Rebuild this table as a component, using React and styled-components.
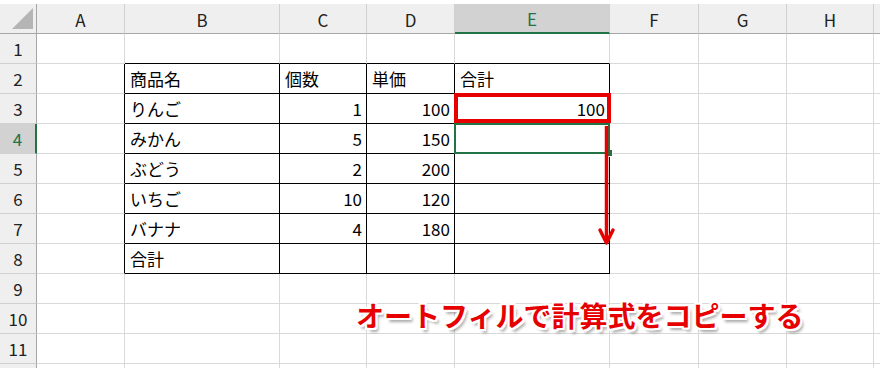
import React from 'react'
import styled, { createGlobalStyle } from 'styled-components'

const GRID = '#d9d9d9'
const HEAD_LINE = '#a6a6a6'
const INK = '#000'
const SELECT = '#217346'
const MARK = '#e60000'

const COLS = ['A', 'B', 'C', 'D', 'E', 'F', 'G', 'H', 'I']
const WIDTHS = [88, 155, 87, 88, 155, 89, 88, 87, 100]
const ROW_COUNT = 12
const LABELED_ROWS = 11

// table body: B2:E8
const DATA = {
  2: ['商品名', '個数', '単価', '合計'],
  3: ['りんご', 1, 100, 100],
  4: ['みかん', 5, 150, ''],
  5: ['ぶどう', 2, 200, ''],
  6: ['いちご', 10, 120, ''],
  7: ['バナナ', 4, 180, ''],
  8: ['合計', '', '', '']
}

const GlobalStyle = createGlobalStyle`
  body {
    margin: 0;
    background: #fff;
    font-family: "Noto Sans CJK JP", "Noto Sans", sans-serif;
    overflow: hidden;
  }
`

const Page = styled.div`
  padding-top: 4px;
  width: 880px;
  height: 364px;
  overflow: hidden;
`

const Sheet = styled.div`
  position: relative;
  display: grid;
  grid-template-columns: 37px ${WIDTHS.map(w => `${w}px`).join(' ')};
  grid-template-rows: 30px repeat(${ROW_COUNT}, 30px);
`

const Corner = styled.div`
  background: #efefef;
  border-right: 1px solid ${HEAD_LINE};
  border-bottom: 1px solid ${HEAD_LINE};
  box-sizing: border-box;

  svg {
    display: block;
  }
`

const ColHead = styled.div`
  box-sizing: border-box;
  display: flex;
  align-items: center;
  justify-content: center;
  background: ${({ $active }) => ($active ? '#d2d2d2' : '#efefef')};
  color: ${({ $active }) => ($active ? SELECT : '#222')};
  border-right: 1px solid #d0d0d0;
  border-bottom: ${({ $active }) => ($active ? `2px solid ${SELECT}` : `1px solid ${HEAD_LINE}`)};
  font-size: 17px;
  padding-top: 1px;
`

const RowHead = styled.div`
  box-sizing: border-box;
  display: flex;
  align-items: center;
  justify-content: center;
  background: ${({ $active }) => ($active ? '#d2d2d2' : '#efefef')};
  color: ${({ $active }) => ($active ? SELECT : '#222')};
  border-right: ${({ $active }) => ($active ? `2px solid ${SELECT}` : `1px solid ${HEAD_LINE}`)};
  border-bottom: 1px solid #d0d0d0;
  font-size: 17px;
`

const Cell = styled.div`
  position: relative;
  box-sizing: border-box;
  display: flex;
  align-items: center;
  justify-content: ${({ $align }) => ($align === 'right' ? 'flex-end' : 'flex-start')};
  padding: 0 4px 0 5px;
  border-right: 1px solid ${({ $right }) => $right};
  border-bottom: 1px solid ${({ $bottom }) => $bottom};
  color: ${INK};
  font-size: 17px;
  white-space: nowrap;

  ${({ $boxed }) =>
    $boxed &&
    `
    &::after {
      content: '';
      position: absolute;
      left: -1px;
      top: -1px;
      right: -2px;
      bottom: 0;
      border: 4px solid ${MARK};
      z-index: 2;
    }
  `}

  ${({ $selected }) =>
    $selected &&
    `
    &::after {
      content: '';
      position: absolute;
      left: -1px;
      top: -1px;
      right: -1px;
      bottom: -1px;
      border: 2px solid ${SELECT};
      z-index: 1;
    }
    &::before {
      content: '';
      position: absolute;
      right: -4px;
      bottom: -4px;
      width: 6px;
      height: 6px;
      background: ${SELECT};
      border: 1px solid #fff;
      z-index: 1;
    }
  `}
`

const Arrow = styled.svg`
  position: absolute;
  left: 596px;
  top: 118px;
  z-index: 3;
  overflow: visible;
`

const Caption = styled.div`
  position: absolute;
  left: 356px;
  top: 295px;
  z-index: 3;
  font-size: 28px;
  line-height: 32px;
  font-weight: 700;
  color: ${MARK};
  white-space: nowrap;
  text-shadow:
    -2px 0 0 #fff, 2px 0 0 #fff, 0 -2px 0 #fff, 0 2px 0 #fff,
    -2px -2px 0 #fff, 2px -2px 0 #fff, -2px 2px 0 #fff, 2px 2px 0 #fff,
    3px 4px 3px rgba(0, 0, 0, 0.35);
`

const inTable = (r, c) => r >= 2 && r <= 8 && c >= 1 && c <= 4

function borderRight(r, c) {
  // column A's right edge is the table's left edge
  if (r >= 2 && r <= 8 && c >= 0 && c <= 4) return INK
  return GRID
}

function borderBottom(r, c) {
  if (r >= 1 && r <= 8 && c >= 1 && c <= 4) return INK
  return GRID
}

function cellValue(r, c) {
  if (!inTable(r, c)) return ''
  return DATA[r][c - 1]
}

export default function App() {
  const rows = Array.from({ length: ROW_COUNT }, (_, i) => i + 1)

  return (
    <Page>
      <GlobalStyle />
      <Sheet>
        <Corner>
          <svg width="36" height="29">
            <polygon points="12,25 33,25 33,4" fill="#b5b5b5" />
          </svg>
        </Corner>
        {COLS.map(col => (
          <ColHead key={col} $active={col === 'E'}>
            {col === 'I' ? '' : col}
          </ColHead>
        ))}

        {rows.map(r => (
          <React.Fragment key={r}>
            <RowHead $active={r === 4}>{r <= LABELED_ROWS ? r : ''}</RowHead>
            {COLS.map((col, c) => {
              const value = cellValue(r, c)
              return (
                <Cell
                  key={col}
                  $right={borderRight(r, c)}
                  $bottom={borderBottom(r, c)}
                  $align={typeof value === 'number' ? 'right' : 'left'}
                  $boxed={r === 3 && col === 'E'}
                  $selected={r === 4 && col === 'E'}
                >
                  {value}
                </Cell>
              )
            })}
          </React.Fragment>
        ))}

        <Arrow width="22" height="126" viewBox="0 0 22 126">
          <line x1="10.5" y1="4" x2="10.5" y2="120" stroke={MARK} strokeWidth="3.5" />
          <polyline
            points="4,108 10.5,121 17,108"
            fill="none"
            stroke={MARK}
            strokeWidth="3.5"
            strokeLinecap="round"
            strokeLinejoin="round"
          />
        </Arrow>

        <Caption>オートフィルで計算式をコピーする</Caption>
      </Sheet>
    </Page>
  )
}
